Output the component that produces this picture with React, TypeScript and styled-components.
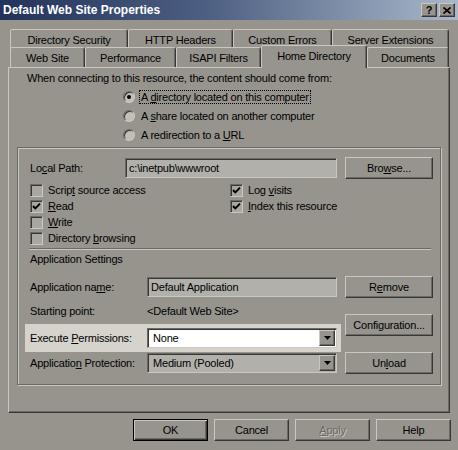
import styled, { createGlobalStyle } from "styled-components";

const face = "#97948d";
const light = "#cac7c0";
const shadow = "#6b6964";
const dark = "#383734";

const GlobalStyle = createGlobalStyle`
  html, body {
    margin: 0;
    padding: 0;
  }
  body {
    background: ${face};
    font-family: "Liberation Sans", Arial, sans-serif;
    font-size: 11px;
    letter-spacing: -0.2px;
    color: #000;
  }
`;

const Window = styled.div`
  width: 458px;
  height: 450px;
  box-sizing: border-box;
  background: ${face};
  overflow: hidden;
`;

const TitleBar = styled.div`
  height: 20px;
  display: flex;
  align-items: center;
  justify-content: space-between;
  padding: 0 3px 0 3px;
  background: linear-gradient(to right, #22325a 0%, #4d5f82 45%, #a9b8ca 100%);
`;

const Title = styled.span`
  color: #fff;
  font-weight: bold;
  font-size: 12px;
  letter-spacing: 0;
`;

const Controls = styled.div`
  display: flex;
  gap: 2px;
`;

const CaptionButton = styled.div`
  width: 16px;
  height: 14px;
  box-sizing: border-box;
  display: flex;
  align-items: center;
  justify-content: center;
  background: ${face};
  border: 1px solid;
  border-color: ${light} ${dark} ${dark} ${light};
  box-shadow: inset -1px -1px 0 ${shadow};
  font-weight: bold;
  font-size: 11px;
  line-height: 1;
  letter-spacing: 0;
`;

const TabStrip = styled.div`
  margin: 9px 0 0 10px;
`;

const TabRow = styled.div<{ $h: number }>`
  display: flex;
  height: ${(p) => p.$h}px;
`;

const Tab = styled.div<{ $w: number; $active?: boolean }>`
  position: relative;
  box-sizing: border-box;
  width: ${(p) => p.$w}px;
  height: ${(p) => (p.$active ? 23 : 20)}px;
  margin-top: ${(p) => (p.$active ? -2 : 0)}px;
  z-index: ${(p) => (p.$active ? 2 : 0)};
  padding-top: 4px;
  line-height: 13px;
  text-align: center;
  white-space: nowrap;
  background: ${face};
  border: 1px solid;
  border-bottom: none;
  border-color: ${light} ${dark} transparent ${light};
  border-radius: 2px 3px 0 0;
  box-shadow: inset -1px 0 0 ${shadow};
`;

const Panel = styled.div`
  position: relative;
  z-index: 1;
  margin: 0 8px;
  height: 346px;
  box-sizing: border-box;
  border: 1px solid;
  border-color: ${light} ${dark} ${dark} ${light};
  box-shadow: inset -1px -1px 0 ${shadow};
  padding: 4px 8px 0 8px;
`;

const Intro = styled.div`
  margin-left: 10px;
  line-height: 13px;
`;

const RadioList = styled.div`
  margin: 2px 0 0 106px;
  display: flex;
  flex-direction: column;
`;

const RadioRow = styled.div`
  height: 19px;
  display: flex;
  align-items: center;
  gap: 4px;
`;

const Radio = styled.span<{ $on?: boolean }>`
  width: 12px;
  height: 12px;
  box-sizing: border-box;
  border-radius: 50%;
  border: 1px solid;
  border-color: ${shadow} ${light} ${light} ${shadow};
  background: #c2bfb8;
  box-shadow: inset 1px 1px 0 ${dark};
  display: flex;
  align-items: center;
  justify-content: center;
  &::after {
    content: "";
    width: 4px;
    height: 4px;
    border-radius: 50%;
    background: ${(p) => (p.$on ? "#000" : "transparent")};
  }
`;

const RadioText = styled.span<{ $focus?: boolean }>`
  padding: 0 1px;
  line-height: 12px;
  border: 1px dotted ${(p) => (p.$focus ? "#000" : "transparent")};
`;

const U = styled.span`
  text-decoration: underline;
`;

const Group = styled.div`
  margin-top: 3px;
  height: 238px;
  box-sizing: border-box;
  border: 1px solid ${shadow};
  box-shadow: inset 1px 1px 0 ${light}, 1px 1px 0 ${light};
  padding: 9px 7px 0 7px;
`;

const SplitRow = styled.div`
  display: flex;
  gap: 4px;
  align-items: flex-start;
`;

const Field = styled.div<{ $h: number; $hl?: boolean }>`
  width: 316px;
  height: ${(p) => p.$h}px;
  box-sizing: border-box;
  display: flex;
  align-items: center;
  padding: 0 4px 0 5px;
  background: ${(p) => (p.$hl ? "#d6d3cc" : "transparent")};
`;

const FieldLabel = styled.span<{ $w: number }>`
  width: ${(p) => p.$w}px;
  flex: none;
  white-space: nowrap;
`;

const TextBox = styled.div<{ $white?: boolean }>`
  flex: 1;
  height: 20px;
  box-sizing: border-box;
  display: flex;
  align-items: center;
  padding-left: 3px;
  background: ${(p) => (p.$white ? "#fff" : "#b2b0aa")};
  border: 1px solid;
  border-color: ${shadow} ${light} ${light} ${shadow};
  box-shadow: inset 1px 1px 0 ${dark};
  white-space: nowrap;
`;

const SelectText = styled.span`
  flex: 1;
  padding-left: 2px;
`;

const DropButton = styled.span`
  width: 16px;
  height: 16px;
  box-sizing: border-box;
  margin-right: 1px;
  display: flex;
  align-items: center;
  justify-content: center;
  background: ${face};
  border: 1px solid;
  border-color: ${light} ${dark} ${dark} ${light};
  box-shadow: inset -1px -1px 0 ${shadow};
`;

const PushButton = styled.div<{ $w: number; $default?: boolean; $disabled?: boolean }>`
  width: ${(p) => p.$w}px;
  height: 22px;
  flex: none;
  box-sizing: border-box;
  display: flex;
  align-items: center;
  justify-content: center;
  background: ${face};
  border: 1px solid;
  border-color: ${(p) => (p.$default ? "#000" : `${light} ${dark} ${dark} ${light}`)};
  box-shadow: ${(p) =>
    p.$default
      ? `inset 1px 1px 0 ${light}, inset -1px -1px 0 ${dark}, inset -2px -2px 0 ${shadow}`
      : `inset -1px -1px 0 ${shadow}`};
  color: ${(p) => (p.$disabled ? shadow : "#000")};
  text-shadow: ${(p) => (p.$disabled ? `1px 1px 0 ${light}` : "none")};
`;

const CheckGrid = styled.div`
  margin-top: 3px;
  padding-left: 5px;
  display: grid;
  grid-template-columns: 200px auto;
  grid-auto-rows: 16px;
`;

const CheckItem = styled.div`
  display: flex;
  align-items: center;
  gap: 5px;
`;

const CheckBox = styled.span`
  width: 13px;
  height: 13px;
  box-sizing: border-box;
  display: flex;
  align-items: center;
  justify-content: center;
  background: #a9a7a1;
  border: 1px solid;
  border-color: ${shadow} ${light} ${light} ${shadow};
  box-shadow: inset 1px 1px 0 ${dark};
`;

const Separator = styled.div`
  margin: 2px 2px 0 4px;
  border-top: 1px solid ${shadow};
  border-bottom: 1px solid ${light};
`;

const SectionTitle = styled.div`
  margin-top: 3px;
  padding-left: 5px;
  line-height: 13px;
`;

const AppSection = styled.div`
  margin-top: 10px;
  display: flex;
  gap: 4px;
`;

const Stack = styled.div<{ $gap: number }>`
  display: flex;
  flex-direction: column;
  gap: ${(p) => p.$gap}px;
`;

const Footer = styled.div`
  display: flex;
  justify-content: flex-end;
  gap: 6px;
  padding: 6px 7px 0 0;
`;

function Check({ on, children }: { on?: boolean; children: React.ReactNode }) {
  return (
    <CheckItem>
      <CheckBox>
        {on && (
          <svg width="9" height="9" viewBox="0 0 9 9">
            <path d="M1 4 L3.3 6.4 L8 1.6" stroke="#000" strokeWidth="1.9" fill="none" />
          </svg>
        )}
      </CheckBox>
      <span>{children}</span>
    </CheckItem>
  );
}

function Arrow() {
  return (
    <svg width="7" height="4" viewBox="0 0 7 4">
      <polygon points="0,0 7,0 3.5,4" fill="#000" />
    </svg>
  );
}

export default function App() {
  return (
    <>
      <GlobalStyle />
      <Window>
        <TitleBar>
          <Title>Default Web Site Properties</Title>
          <Controls>
            <CaptionButton>?</CaptionButton>
            <CaptionButton>
              <svg width="8" height="7" viewBox="0 0 8 7">
                <path d="M0.5 0.5 L7.5 6.5 M7.5 0.5 L0.5 6.5" stroke="#000" strokeWidth="1.7" />
              </svg>
            </CaptionButton>
          </Controls>
        </TitleBar>

        <TabStrip>
          <TabRow $h={18}>
            <Tab $w={118}>Directory Security</Tab>
            <Tab $w={105}>HTTP Headers</Tab>
            <Tab $w={99}>Custom Errors</Tab>
            <Tab $w={117}>Server Extensions</Tab>
          </TabRow>
          <TabRow $h={20}>
            <Tab $w={75}>Web Site</Tab>
            <Tab $w={91}>Performance</Tab>
            <Tab $w={85}>ISAPI Filters</Tab>
            <Tab $w={106} $active>
              Home Directory
            </Tab>
            <Tab $w={82}>Documents</Tab>
          </TabRow>
        </TabStrip>

        <Panel>
          <Intro>When connecting to this resource, the content should come from:</Intro>
          <RadioList>
            <RadioRow>
              <Radio $on />
              <RadioText $focus>
                A <U>d</U>irectory located on this computer
              </RadioText>
            </RadioRow>
            <RadioRow>
              <Radio />
              <RadioText>
                A <U>s</U>hare located on another computer
              </RadioText>
            </RadioRow>
            <RadioRow>
              <Radio />
              <RadioText>
                A redirection to a <U>U</U>RL
              </RadioText>
            </RadioRow>
          </RadioList>

          <Group>
            <SplitRow>
              <Field $h={22}>
                <FieldLabel $w={95}>
                  Lo<U>c</U>al Path:
                </FieldLabel>
                <TextBox>c:\inetpub\wwwroot</TextBox>
              </Field>
              <PushButton $w={88}>
                Bro<U>w</U>se...
              </PushButton>
            </SplitRow>

            <CheckGrid>
              <Check>
                Scrip<U>t</U> source access
              </Check>
              <Check on>
                Log <U>v</U>isits
              </Check>
              <Check on>
                <U>R</U>ead
              </Check>
              <Check on>
                <U>I</U>ndex this resource
              </Check>
              <Check>
                <U>W</U>rite
              </Check>
              <span />
              <Check>
                Directory <U>b</U>rowsing
              </Check>
            </CheckGrid>

            <Separator />
            <SectionTitle>Application Settings</SectionTitle>

            <AppSection>
              <Stack $gap={0}>
                <Field $h={22}>
                  <FieldLabel $w={117}>
                    Application na<U>m</U>e:
                  </FieldLabel>
                  <TextBox>Default Application</TextBox>
                </Field>
                <Field $h={26}>
                  <FieldLabel $w={117}>Starting point:</FieldLabel>
                  <span>&lt;Default Web Site&gt;</span>
                </Field>
                <Field $h={28} $hl>
                  <FieldLabel $w={117}>
                    Execute <U>P</U>ermissions:
                  </FieldLabel>
                  <TextBox $white>
                    <SelectText>None</SelectText>
                    <DropButton>
                      <Arrow />
                    </DropButton>
                  </TextBox>
                </Field>
                <Field $h={22}>
                  <FieldLabel $w={117}>
                    Applicatio<U>n</U> Protection:
                  </FieldLabel>
                  <TextBox>
                    <SelectText>Medium (Pooled)</SelectText>
                    <DropButton>
                      <Arrow />
                    </DropButton>
                  </TextBox>
                </Field>
              </Stack>
              <Stack $gap={16}>
                <PushButton $w={88}>
                  R<U>e</U>move
                </PushButton>
                <PushButton $w={88}>Configuration...</PushButton>
                <PushButton $w={88}>
                  Un<U>l</U>oad
                </PushButton>
              </Stack>
            </AppSection>
          </Group>
        </Panel>

        <Footer>
          <PushButton $w={75} $default>
            OK
          </PushButton>
          <PushButton $w={75}>Cancel</PushButton>
          <PushButton $w={75} $disabled>
            <U>A</U>pply
          </PushButton>
          <PushButton $w={75}>Help</PushButton>
        </Footer>
      </Window>
    </>
  );
}
